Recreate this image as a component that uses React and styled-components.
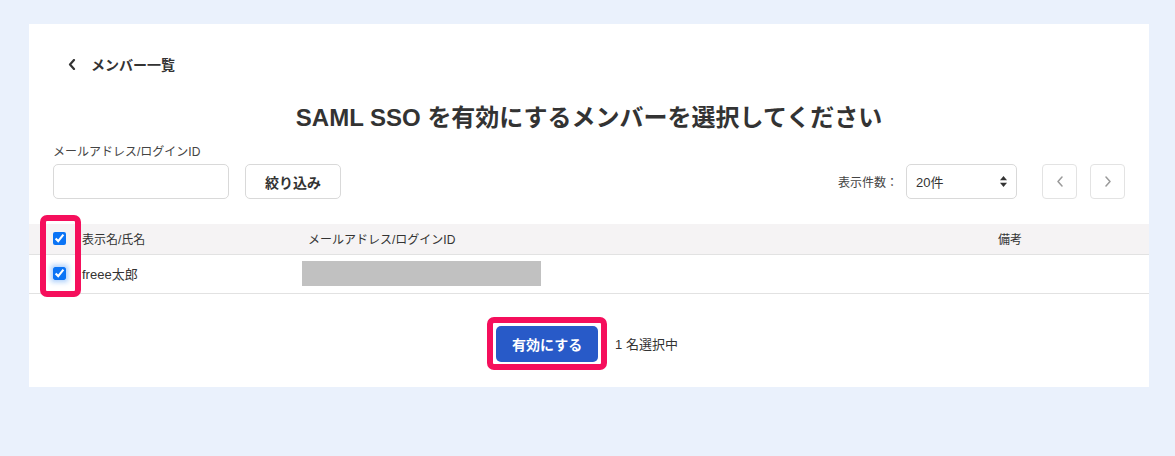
import React from "react";
import styled, { createGlobalStyle } from "styled-components";

const GlobalStyle = createGlobalStyle`
  body {
    margin: 0;
    background: #eaf1fc;
    font-family: "Liberation Sans", "Noto Sans CJK JP", sans-serif;
    color: #333;
  }
`;

const Page = styled.div`
  padding: 24px 0 69px 29px;
`;

const Card = styled.div`
  width: 1120px;
  background: #fff;
  padding: 30px 0 25px;
  box-sizing: border-box;
`;

const BackLink = styled.a`
  display: flex;
  align-items: center;
  gap: 15px;
  margin-left: 39px;
  height: 20px;
  font-size: 14px;
  font-weight: bold;
  color: #333;
  text-decoration: none;
`;

const Title = styled.h1`
  margin: 28px 0 0;
  text-align: center;
  font-size: 24px;
  line-height: 32px;
  font-weight: bold;
  color: #333;
`;

const Toolbar = styled.div`
  display: flex;
  justify-content: space-between;
  align-items: flex-end;
  padding: 0 24px;
  margin-top: 10px;
`;

const FilterGroup = styled.div`
  display: flex;
  flex-direction: column;
  gap: 4px;
`;

const Label = styled.label`
  font-size: 12px;
  line-height: 16px;
  color: #444;
`;

const Row = styled.div`
  display: flex;
  align-items: center;
  gap: ${(p) => p.$gap || 16}px;
`;

const TextInput = styled.input`
  width: 176px;
  height: 35px;
  box-sizing: border-box;
  border: 1px solid #d9d9d9;
  border-radius: 5px;
  padding: 0 8px;
  font-size: 13px;
  outline: none;
`;

const Button = styled.button`
  height: 35px;
  width: ${(p) => p.$width || 96}px;
  box-sizing: border-box;
  border: 1px solid #d9d9d9;
  border-radius: 5px;
  background: #fff;
  font-family: inherit;
  font-size: 14px;
  font-weight: bold;
  color: #333;
  display: flex;
  align-items: center;
  justify-content: center;
  padding: 0;
`;

const CountLabel = styled.span`
  font-size: 12px;
  color: #444;
  margin-right: -17px;
`;

const SelectBox = styled.div`
  width: 111px;
  height: 35px;
  box-sizing: border-box;
  border: 1px solid #d9d9d9;
  border-radius: 5px;
  display: flex;
  align-items: center;
  justify-content: space-between;
  padding: 0 9px 0 9px;
  font-size: 13px;
  color: #333;
`;

const Pager = styled.div`
  display: flex;
  gap: 13px;
`;

const PagerButton = styled.button`
  width: 35px;
  height: 35px;
  box-sizing: border-box;
  border: 1px solid #e3e3e3;
  border-radius: 4px;
  background: #fff;
  display: flex;
  align-items: center;
  justify-content: center;
  padding: 0;
`;

const TableWrap = styled.div`
  position: relative;
  margin-top: 25px;
`;

const Table = styled.table`
  width: 100%;
  border-collapse: collapse;
  table-layout: fixed;
  font-size: 12px;
`;

const HeadRow = styled.tr`
  background: #f5f3f4;
  height: 30px;
  border-bottom: 1px solid #e2e2e2;
`;

const BodyRow = styled.tr`
  height: 39px;
  border-bottom: 1px solid #e2e2e2;
`;

const Cell = styled.td`
  padding: 0;
  text-align: left;
  vertical-align: middle;
  width: ${(p) => (p.$width ? `${p.$width}px` : "auto")};
  padding-left: ${(p) => p.$pl || 0}px;
  box-sizing: border-box;
  font-size: ${(p) => p.$size || 12}px;
  font-weight: normal;
  color: #333;
`;

const Check = styled.input`
  width: 13px;
  height: 13px;
  margin: 3px 0 0 0;
  accent-color: #0b74f5;
  box-shadow: ${(p) => (p.$focus ? "0 0 5px 2px rgba(11,116,245,0.35)" : "none")};
  border-radius: 2px;
`;

const Masked = styled.div`
  width: 239px;
  height: 25px;
  background: #c1c1c1;
`;

const Highlight = styled.div`
  position: absolute;
  border: 6px solid #f50f5c;
  border-radius: 7px;
  box-sizing: border-box;
  pointer-events: none;
`;

const Footer = styled.div`
  display: flex;
  justify-content: center;
  align-items: center;
  gap: 17px;
  margin-top: 32px;
  padding-right: 4px;
`;

const PrimaryWrap = styled.div`
  position: relative;
`;

const PrimaryButton = styled.button`
  height: 36px;
  width: 102px;
  border: none;
  border-radius: 5px;
  background: #285ac8;
  color: #fff;
  font-family: inherit;
  font-size: 14px;
  font-weight: bold;
  padding: 0;
  display: block;
`;

const SelectedText = styled.span`
  font-size: 13px;
  color: #333;
`;

const Chevron = ({ dir = "left", color = "#333", w = 2 }) => (
  <svg width="8" height="11" viewBox="0 0 8 11">
    <polyline
      points={dir === "left" ? "6,1 2,5.5 6,10" : "2,1 6,5.5 2,10"}
      fill="none"
      stroke={color}
      strokeWidth={w}
      strokeLinecap="round"
      strokeLinejoin="round"
    />
  </svg>
);

const SortArrows = () => (
  <svg width="7" height="11" viewBox="0 0 7 11">
    <polygon points="3.5,0 7,4.3 0,4.3" fill="#333" />
    <polygon points="0,6.7 7,6.7 3.5,11" fill="#333" />
  </svg>
);

export default function App() {
  return (
    <>
      <GlobalStyle />
      <Page>
        <Card>
          <BackLink href="#">
            <Chevron dir="left" color="#333" w={2.2} />
            メンバー一覧
          </BackLink>

          <Title>SAML SSO を有効にするメンバーを選択してください</Title>

          <Toolbar>
            <FilterGroup>
              <Label>メールアドレス/ログインID</Label>
              <Row>
                <TextInput />
                <Button>絞り込み</Button>
              </Row>
            </FilterGroup>
            <Row $gap={25}>
              <CountLabel>表示件数：</CountLabel>
              <SelectBox>
                <span>20件</span>
                <SortArrows />
              </SelectBox>
              <Pager>
                <PagerButton>
                  <Chevron dir="left" color="#9a9a9a" w={1.5} />
                </PagerButton>
                <PagerButton>
                  <Chevron dir="right" color="#9a9a9a" w={1.5} />
                </PagerButton>
              </Pager>
            </Row>
          </Toolbar>

          <TableWrap>
            <Table>
              <thead>
                <HeadRow>
                  <Cell as="th" $width={53} $pl={24}>
                    <Check type="checkbox" defaultChecked />
                  </Cell>
                  <Cell as="th" $width={220}>表示名/氏名</Cell>
                  <Cell as="th" $width={696} $pl={6}>メールアドレス/ログインID</Cell>
                  <Cell as="th">備考</Cell>
                </HeadRow>
              </thead>
              <tbody>
                <BodyRow>
                  <Cell $pl={24}>
                    <Check type="checkbox" defaultChecked $focus />
                  </Cell>
                  <Cell $size={13}>freee太郎</Cell>
                  <Cell>
                    <Masked />
                  </Cell>
                  <Cell />
                </BodyRow>
              </tbody>
            </Table>
            <Highlight style={{ left: 11, top: -9, width: 41, height: 82 }} />
          </TableWrap>

          <Footer>
            <PrimaryWrap>
              <PrimaryButton>有効にする</PrimaryButton>
              <Highlight style={{ left: -9, top: -9, right: -9, bottom: -8 }} />
            </PrimaryWrap>
            <SelectedText>1 名選択中</SelectedText>
          </Footer>
        </Card>
      </Page>
    </>
  );
}
